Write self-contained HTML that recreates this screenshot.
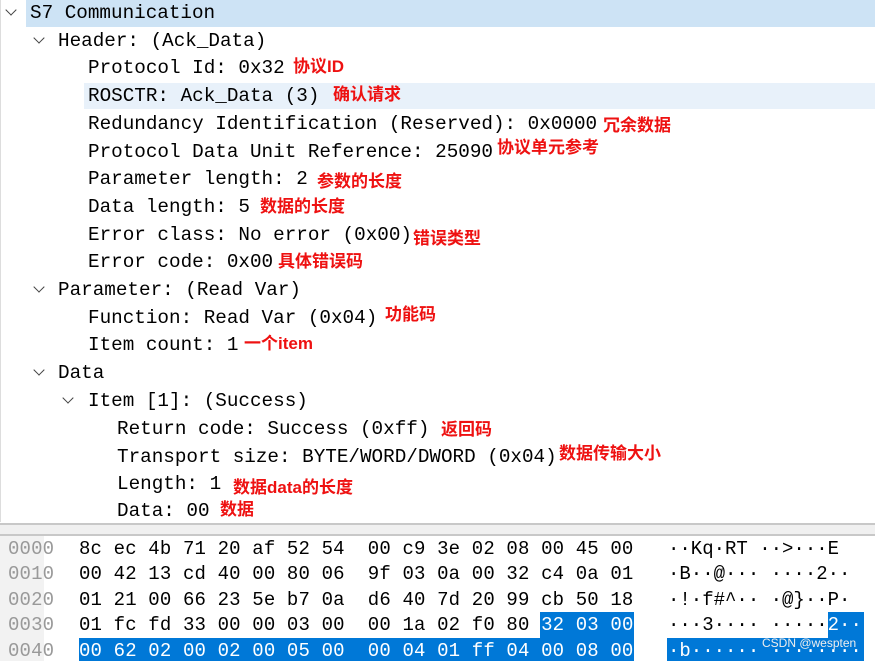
<!DOCTYPE html>
<html><head><meta charset="utf-8"><style>
body{margin:0;width:875px;height:661px;overflow:hidden;background:#fff;position:relative;font-family:"Liberation Mono",monospace;}
.t{position:absolute;font-size:19.3px;color:#000;white-space:pre;line-height:22px;}
.a{position:absolute;font-family:"Liberation Sans","Noto Sans CJK SC",sans-serif;font-weight:bold;font-size:17px;color:#ee1111;white-space:pre;line-height:20px;}
.c{position:absolute;width:7px;height:7px;border-right:1.5px solid #444;border-bottom:1.5px solid #444;transform:rotate(45deg);}
.h{position:absolute;font-size:19px;letter-spacing:0.15px;white-space:pre;line-height:22px;color:#000;}
.o{color:#999;}
</style></head><body>
<div style="position:absolute;left:26px;top:0;width:849px;height:27px;background:#cde3f5"></div>
<div style="position:absolute;left:84px;top:83px;width:791px;height:26px;background:#e8f1fa"></div>
<div style="position:absolute;left:0;top:0;width:1px;height:522px;background:#ddd"></div>

<div class="c" style="left:7px;top:6px"></div><div class="t" style="left:30px;top:2px">S7 Communication</div>
<div class="c" style="left:35px;top:34px"></div><div class="t" style="left:58px;top:30px">Header: (Ack_Data)</div>
<div class="t" style="left:88px;top:57px">Protocol Id: 0x32</div><div class="a" style="left:293px;top:57px">协议ID</div>
<div class="t" style="left:88px;top:85px">ROSCTR: Ack_Data (3)</div><div class="a" style="left:333px;top:85px">确认请求</div>
<div class="t" style="left:88px;top:113px">Redundancy Identification (Reserved): 0x0000</div><div class="a" style="left:603px;top:116px">冗余数据</div>
<div class="t" style="left:88px;top:141px">Protocol Data Unit Reference: 25090</div><div class="a" style="left:497px;top:138px">协议单元参考</div>
<div class="t" style="left:88px;top:168px">Parameter length: 2</div><div class="a" style="left:317px;top:172px">参数的长度</div>
<div class="t" style="left:88px;top:196px">Data length: 5</div><div class="a" style="left:260px;top:197px">数据的长度</div>
<div class="t" style="left:88px;top:224px">Error class: No error (0x00)</div><div class="a" style="left:413px;top:229px">错误类型</div>
<div class="t" style="left:88px;top:251px">Error code: 0x00</div><div class="a" style="left:278px;top:252px">具体错误码</div>
<div class="c" style="left:35px;top:283px"></div><div class="t" style="left:58px;top:279px">Parameter: (Read Var)</div>
<div class="t" style="left:88px;top:307px">Function: Read Var (0x04)</div><div class="a" style="left:385px;top:305px">功能码</div>
<div class="t" style="left:88px;top:334px">Item count: 1</div><div class="a" style="left:244px;top:334px">一个item</div>
<div class="c" style="left:35px;top:366px"></div><div class="t" style="left:58px;top:362px">Data</div>
<div class="c" style="left:64px;top:394px"></div><div class="t" style="left:88px;top:390px">Item [1]: (Success)</div>
<div class="t" style="left:117px;top:418px">Return code: Success (0xff)</div><div class="a" style="left:441px;top:420px">返回码</div>
<div class="t" style="left:117px;top:446px">Transport size: BYTE/WORD/DWORD (0x04)</div><div class="a" style="left:559px;top:444px">数据传输大小</div>
<div class="t" style="left:117px;top:473px">Length: 1</div><div class="a" style="left:233px;top:478px">数据data的长度</div>
<div class="t" style="left:117px;top:500px">Data: 00</div><div class="a" style="left:220px;top:500px">数据</div>

<div style="position:absolute;left:0;top:523px;width:875px;height:2px;background:#c8c8c8"></div>
<div style="position:absolute;left:0;top:525px;width:875px;height:9px;background:#f0f0f0"></div>
<div style="position:absolute;left:0;top:534px;width:875px;height:2px;background:#c8c8c8"></div>
<div style="position:absolute;left:0;top:536px;width:44px;height:125px;background:#f2f2f2"></div>

<div style="position:absolute;left:540px;top:612px;width:94px;height:26px;background:#0078d7"></div>
<div style="position:absolute;left:79px;top:638px;width:555px;height:23px;background:#0078d7"></div>
<div style="position:absolute;left:828px;top:612px;width:36px;height:26px;background:#0078d7"></div>
<div style="position:absolute;left:667px;top:638px;width:197px;height:23px;background:#0078d7"></div>

<div class="h o" style="left:8px;top:538px">0000</div>
<div class="h o" style="left:8px;top:563px">0010</div>
<div class="h o" style="left:8px;top:589px">0020</div>
<div class="h o" style="left:8px;top:614px">0030</div>
<div class="h o" style="left:8px;top:640px">0040</div>

<div class="h" style="left:79px;top:538px">8c ec 4b 71 20 af 52 54  00 c9 3e 02 08 00 45 00</div>
<div class="h" style="left:79px;top:563px">00 42 13 cd 40 00 80 06  9f 03 0a 00 32 c4 0a 01</div>
<div class="h" style="left:79px;top:589px">01 21 00 66 23 5e b7 0a  d6 40 7d 20 99 cb 50 18</div>
<div class="h" style="left:79px;top:614px">01 fc fd 33 00 00 03 00  00 1a 02 f0 80 <span style="color:#fff">32 03 00</span></div>
<div class="h" style="left:79px;top:640px;color:#fff">00 62 02 00 02 00 05 00  00 04 01 ff 04 00 08 00</div>

<div class="h" style="left:668px;top:538px;letter-spacing:0">··Kq·RT ··&gt;···E</div>
<div class="h" style="left:668px;top:563px;letter-spacing:0">·B··@··· ····2··</div>
<div class="h" style="left:668px;top:589px;letter-spacing:0">·!·f#^·· ·@}··P·</div>
<div class="h" style="left:668px;top:614px;letter-spacing:0">···3···· ·····<span style="color:#fff">2··</span></div>
<div class="h" style="left:668px;top:640px;letter-spacing:0;color:#fff">·b······ ········</div>
<div style="position:absolute;left:762px;top:636px;font-family:'Liberation Sans',sans-serif;font-size:12px;color:#eee">CSDN @wespten</div>
</body></html>
